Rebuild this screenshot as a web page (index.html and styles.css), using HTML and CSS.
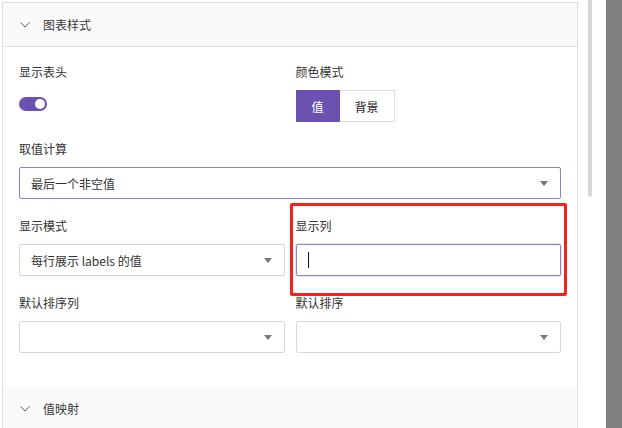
FILE: index.html
```html
<!DOCTYPE html>
<html lang="zh-CN">
<head>
  <meta charset="UTF-8">
  <meta name="viewport" content="width=device-width, initial-scale=1.0">
  <title>图表样式</title>
  <link rel="stylesheet" href="styles.css">
</head>
<body>
  <div class="page">
    <div class="panel">
      <section class="group">
        <div class="group-head">
          <svg class="chevron" width="10" height="6" viewBox="0 0 10 6"><polyline points="0.5,0.5 5,5 9.5,0.5" fill="none" stroke="#555" stroke-width="1"/></svg>
          <span>图表样式</span>
        </div>
        <div class="group-body">
          <div class="field">
            <label>显示表头</label>
            <div class="control-row">
              <div class="switch on"><span class="knob"></span></div>
            </div>
          </div>
          <div class="field">
            <label>颜色模式</label>
            <div class="btn-group">
              <button class="seg active">值</button>
              <button class="seg">背景</button>
            </div>
          </div>
          <div class="field wide">
            <label>取值计算</label>
            <div class="select focused">
              <span>最后一个非空值</span>
              <i class="caret"></i>
            </div>
          </div>
          <div class="field">
            <label>显示模式</label>
            <div class="select">
              <span>每行展示 labels 的值</span>
              <i class="caret"></i>
            </div>
          </div>
          <div class="field marked">
            <label>显示列</label>
            <div class="input focused"><span class="text-cursor"></span></div>
            <div class="highlight"></div>
          </div>
          <div class="field">
            <label>默认排序列</label>
            <div class="select">
              <span></span>
              <i class="caret"></i>
            </div>
          </div>
          <div class="field">
            <label>默认排序</label>
            <div class="select">
              <span></span>
              <i class="caret"></i>
            </div>
          </div>
        </div>
      </section>
      <section class="group">
        <div class="group-head">
          <svg class="chevron" width="10" height="6" viewBox="0 0 10 6"><polyline points="0.5,0.5 5,5 9.5,0.5" fill="none" stroke="#555" stroke-width="1"/></svg>
          <span>值映射</span>
        </div>
      </section>
    </div>
    <div class="scroll"><div class="thumb"></div></div>
    <div class="edge"></div>
  </div>
</body>
</html>
```
FILE: styles.css
```css
:root {
  --purple: #6c52b0;
  --line: #dedede;
  --text: #333;
}

body {
  margin: 0;
  font-family: "Noto Sans CJK SC", "Noto Sans", sans-serif;
  font-size: 12px;
  color: var(--text);
  background: #fff;
}

.page {
  display: flex;
  height: 428px;
  overflow: hidden;
}

.panel {
  width: 574px;
  margin: 2px 0 0 2px;
  border: 1px solid var(--line);
  border-bottom: none;
}

.group-head {
  height: 43px;
  display: flex;
  align-items: center;
  gap: 13px;
  padding-left: 17px;
  background: #fafafa;
  border-bottom: 1px solid var(--line);
  font-size: 12px;
  color: #3a3a3a;
}

.chevron {
  display: block;
}

.group-body {
  display: grid;
  grid-template-columns: 1fr 1fr;
  column-gap: 11px;
  row-gap: 18px;
  padding: 16px 16px 34px;
}

.field {
  position: relative;
}

.field.wide {
  grid-column: 1 / -1;
}

label {
  display: block;
  line-height: 18px;
  margin-bottom: 9px;
}

.control-row {
  height: 32px;
  box-sizing: border-box;
  padding-top: 7px;
}

.switch {
  width: 28px;
  height: 14px;
  border-radius: 7px;
  background: #ccc;
  position: relative;
}

.switch.on {
  background: var(--purple);
}

.knob {
  position: absolute;
  top: 2px;
  right: 2px;
  width: 10px;
  height: 10px;
  border-radius: 50%;
  background: #fff;
}

.btn-group {
  display: flex;
}

.seg {
  height: 32px;
  padding: 0 15px;
  font-family: inherit;
  font-size: 12px;
  color: #222;
  background: #fff;
  border: 1px solid var(--line);
  margin: 0;
}

.seg.active {
  background: var(--purple);
  border-color: var(--purple);
  color: #fff;
}

.seg + .seg {
  border-left: none;
}

.select, .input {
  height: 32px;
  box-sizing: border-box;
  border: 1px solid #d9d9d9;
  border-radius: 2px;
  display: flex;
  align-items: center;
  justify-content: space-between;
  padding: 0 12px 0 11px;
  background: #fff;
}

.select.focused, .input.focused {
  border-color: #9080c8;
}

.input.focused {
  box-shadow: 0 0 0 1px #e6e1f4;
}

.caret {
  width: 0;
  height: 0;
  border-left: 4px solid transparent;
  border-right: 4px solid transparent;
  border-top: 5px solid #777;
}

.text-cursor {
  width: 1px;
  height: 16px;
  background: #111;
}

.highlight {
  position: absolute;
  top: -14px;
  left: -6px;
  right: -6px;
  bottom: -20px;
  border: 3px solid #f5221b;
  border-radius: 2px;
  pointer-events: none;
}

.scroll {
  width: 28px;
}

.thumb {
  width: 4px;
  height: 197px;
  margin-left: 10px;
  background: #d8d8d8;
  border-radius: 0 0 2px 2px;
}

.edge {
  flex: 1;
  background: #808080;
}
```
